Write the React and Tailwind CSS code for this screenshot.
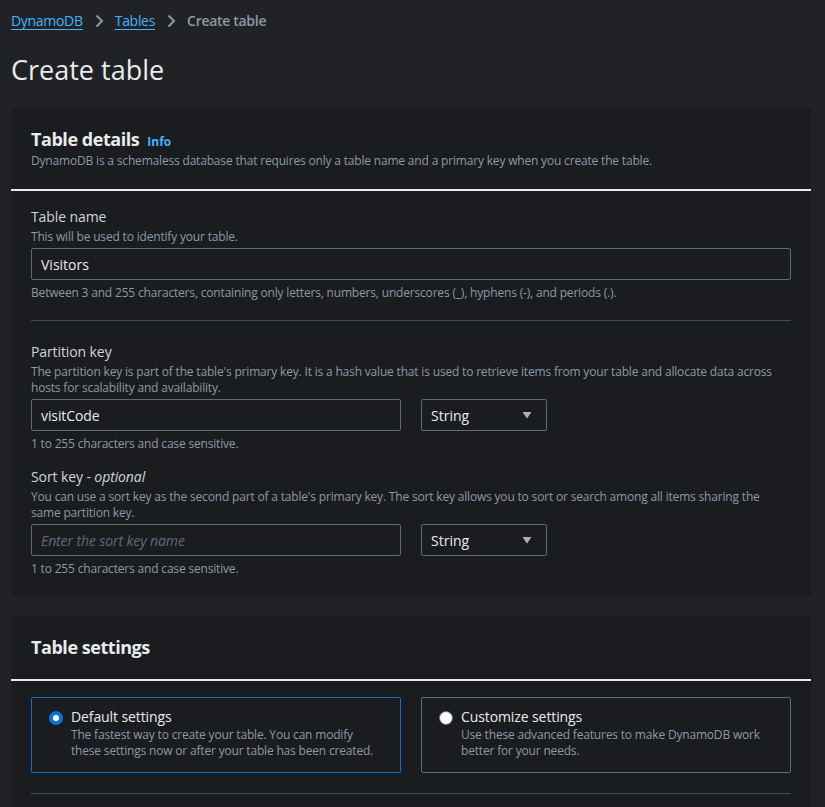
const font = { fontFamily: '"Open Sans", "Noto Sans", Arial, sans-serif' };

function Chevron() {
  return (
    <svg width="16" height="16" viewBox="0 0 16 16" className="mx-[8px] text-[#8d99a8]">
      <path d="M5.5 2.5 11 8l-5.5 5.5" fill="none" stroke="currentColor" strokeWidth="2" />
    </svg>
  );
}

function Caret() {
  return (
    <svg width="12" height="12" viewBox="0 0 12 12" className="text-[#b4b0a8]">
      <path d="M1.5 3h9L6 9.5z" fill="currentColor" />
    </svg>
  );
}

function Field({ label, desc, children, hint }) {
  return (
    <div>
      <div className="text-[14px] leading-[20px] tracking-[-0.1px] text-[#d1d5db]">{label}</div>
      <div className="mt-[2px] text-[12px] leading-[16px] tracking-[-0.18px] text-[#8d99a8]">{desc}</div>
      <div className="mt-[3px]">{children}</div>
      {hint && (
        <div className="mt-[5px] text-[12px] leading-[16px] tracking-[-0.18px] text-[#8d99a8]">{hint}</div>
      )}
    </div>
  );
}

function KeyRow({ value, placeholder }) {
  return (
    <div className="flex gap-[20px]">
      <div
        className={`flex h-[32px] w-[370px] items-center rounded-[2px] border border-[#5f6b7a] px-[9px] text-[14px] tracking-[-0.1px] ${
          value ? 'text-[#e9ebed]' : 'italic text-[#5f6b7a]'
        }`}
      >
        {value || placeholder}
      </div>
      <div className="flex h-[32px] w-[126px] items-center justify-between rounded-[2px] border border-[#5f6b7a] pl-[9px] pr-[13px] text-[14px] text-[#e9ebed]">
        String
        <Caret />
      </div>
    </div>
  );
}

function Tile({ selected, title, desc }) {
  return (
    <div
      className={`flex h-[76px] w-[370px] gap-[8px] rounded-[2px] border px-[17px] pt-[10px] ${
        selected ? 'border-[#0972d3]' : 'border-[#5f6b7a]'
      }`}
    >
      <div className="pt-[3px]">
        {selected ? (
          <div className="flex h-[14px] w-[14px] items-center justify-center rounded-full bg-[#0972d3]">
            <div className="h-[6px] w-[6px] rounded-full bg-white" />
          </div>
        ) : (
          <div className="h-[14px] w-[14px] rounded-full border border-[#5f6b7a] bg-white" />
        )}
      </div>
      <div>
        <div className="text-[14px] leading-[18px] tracking-[-0.1px] text-[#e9ebed]">{title}</div>
        <div className="mt-[1px] text-[12px] leading-[16px] tracking-[-0.18px] text-[#8d99a8]">{desc}</div>
      </div>
    </div>
  );
}

export default function App() {
  return (
    <div className="min-h-screen bg-[#202225] pl-[11px] pr-[14px]" style={font}>
      <nav className="flex h-[40px] items-center pt-[1px] text-[14px] tracking-[-0.3px]">
        <span className="text-[#42b4ff] underline underline-offset-[3px]">DynamoDB</span>
        <Chevron />
        <span className="text-[#42b4ff] underline underline-offset-[3px]">Tables</span>
        <Chevron />
        <span className="font-semibold text-[#8d99a8]">Create table</span>
      </nav>
      <h1 className="pt-[10px] text-[27px] leading-[40px] text-[#e9ebed]">Create table</h1>

      <section className="mt-[17px] w-[800px] bg-[#1b1c1f]">
        <div className="px-[20px] pb-[20px] pt-[20px]">
          <div className="flex items-baseline gap-[8px]">
            <h2 className="text-[18px] font-bold leading-[24px] tracking-[-0.45px] text-[#e9ebed]">Table details</h2>
            <span className="text-[12px] font-bold text-[#42b4ff]">Info</span>
          </div>
          <div className="mt-[2px] text-[12px] leading-[16px] tracking-[-0.18px] text-[#8d99a8]">
            DynamoDB is a schemaless database that requires only a table name and a primary key when you create the table.
          </div>
        </div>
        <div className="h-[2px] bg-[#e9ebed]" />
        <div className="px-[20px] pb-[20px] pt-[16px]">
          <Field
            label="Table name"
            desc="This will be used to identify your table."
            hint="Between 3 and 255 characters, containing only letters, numbers, underscores (_), hyphens (-), and periods (.)."
          >
            <div className="flex h-[32px] items-center rounded-[2px] border border-[#5f6b7a] px-[9px] text-[14px] text-[#e9ebed]">
              Visitors
            </div>
          </Field>
          <div className="mb-[20px] mt-[19px] h-px bg-[#414d5c]" />
          <div className="pt-[1px]">
            <Field
              label="Partition key"
              desc="The partition key is part of the table's primary key. It is a hash value that is used to retrieve items from your table and allocate data across hosts for scalability and availability."
              hint="1 to 255 characters and case sensitive."
            >
              <KeyRow value="visitCode" />
            </Field>
          </div>
          <div className="mt-[15px]">
            <Field
              label={
                <span>
                  Sort key - <i>optional</i>
                </span>
              }
              desc="You can use a sort key as the second part of a table's primary key. The sort key allows you to sort or search among all items sharing the same partition key."
              hint="1 to 255 characters and case sensitive."
            >
              <KeyRow placeholder="Enter the sort key name" />
            </Field>
          </div>
        </div>
      </section>

      <section className="mt-[19px] w-[800px] bg-[#1b1c1f]">
        <div className="px-[20px] pb-[20px] pt-[19px]">
          <h2 className="text-[18px] font-bold leading-[24px] tracking-[-0.45px] text-[#e9ebed]">Table settings</h2>
        </div>
        <div className="h-[2px] bg-[#e9ebed]" />
        <div className="px-[20px] pt-[16px]">
          <div className="flex gap-[20px]">
            <Tile
              selected
              title="Default settings"
              desc="The fastest way to create your table. You can modify these settings now or after your table has been created."
            />
            <Tile
              title="Customize settings"
              desc="Use these advanced features to make DynamoDB work better for your needs."
            />
          </div>
          <div className="mt-[20px] h-px bg-[#414d5c]" />
          <div className="h-[20px]" />
        </div>
      </section>
    </div>
  );
}
